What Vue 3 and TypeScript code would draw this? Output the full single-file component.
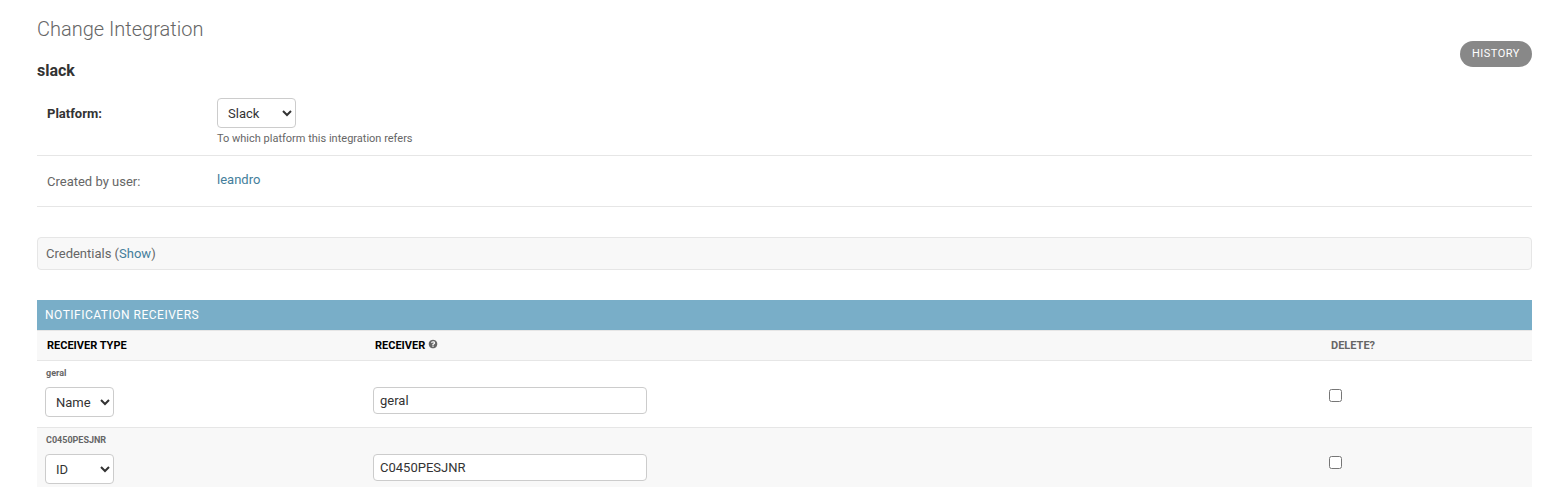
<script setup lang="ts">
import { ref } from 'vue'

interface Receiver {
  id: number
  label: string
  type: 'Name' | 'ID'
  value: string
  remove: boolean
}

const platform = ref('Slack')
const receivers = ref<Receiver[]>([
  { id: 1, label: 'geral', type: 'Name', value: 'geral', remove: false },
  { id: 2, label: 'C0450PESJNR', type: 'ID', value: 'C0450PESJNR', remove: false },
])
</script>

<template>
  <main class="content">
    <header class="page-header">
      <div>
        <h1>Change Integration</h1>
        <h2>slack</h2>
      </div>
      <a class="history">HISTORY</a>
    </header>

    <section class="fields">
      <div class="form-row platform-row">
        <label class="required">Platform:</label>
        <div>
          <select v-model="platform" class="platform-select">
            <option>Slack</option>
          </select>
          <p class="help">To which platform this integration refers</p>
        </div>
      </div>
      <div class="form-row user-row">
        <label>Created by user:</label>
        <a class="link user">leandro</a>
      </div>
    </section>

    <section class="collapsed">Credentials (<a class="link">Show</a>)</section>

    <section class="inline-group">
      <h3>NOTIFICATION RECEIVERS</h3>
      <div class="grid-row heads">
        <span>RECEIVER TYPE</span>
        <span class="head-receiver">
          RECEIVER
          <svg class="help-icon" viewBox="0 0 1792 1792" width="10" height="10">
            <path
              fill="#666"
              d="M1024 1376v-192q0-14-9-23t-23-9h-192q-14 0-23 9t-9 23v192q0 14 9 23t23 9h192q14 0 23-9t9-23zm256-672q0-88-55.500-163t-138.500-116-170-41q-243 0-371 213-15 24 8 42l132 100q7 6 19 6 16 0 25-12 53-68 86-92 34-24 86-24 48 0 85.500 26t37.500 59q0 38-20 61t-68 45q-63 28-115.500 86.500t-52.500 125.500v36q0 14 9 23t23 9h192q14 0 23-9t9-23q0-19 21.500-49.500t54.500-49.500q32-18 49-28.500t46-35 44.500-48 28-60.500 12.500-81zm384 192q0 209-103 385.500t-279.500 279.500-385.500 103-385.500-103-279.500-279.500-103-385.500 103-385.500 279.500-279.500 385.500-103 385.500 103 279.500 279.500 103 385.500z"
            />
          </svg>
        </span>
        <span class="head-delete">DELETE?</span>
      </div>
      <div v-for="r in receivers" :key="r.id" class="grid-row receiver">
        <div>
          <p class="original">{{ r.label }}</p>
          <select v-model="r.type" class="type-select">
            <option>Name</option>
            <option>ID</option>
          </select>
        </div>
        <input v-model="r.value" type="text" class="text-field" spellcheck="false" />
        <input v-model="r.remove" type="checkbox" class="delete-box" />
      </div>
    </section>
  </main>
</template>

<style>
html,
body {
  margin: 0;
  background: #fff;
  overflow: hidden;
}
</style>

<style scoped>
.content {
  box-sizing: border-box;
  height: 487px;
  overflow: hidden;
  padding: 17px 22px 0 37px;
  font-family: Roboto, "Liberation Sans", sans-serif;
  font-size: 13px;
  color: #333;
}
h1,
h2,
h3,
p {
  margin: 0;
}
.page-header {
  display: flex;
  justify-content: space-between;
  height: 71px;
}
h1 {
  font-size: 20px;
  font-weight: 300;
  line-height: 24px;
  color: #666;
}
h2 {
  margin-top: 20px;
  font-size: 16px;
  font-weight: 700;
  line-height: 19px;
}
.history {
  box-sizing: border-box;
  width: 72px;
  height: 26px;
  margin-top: 24px;
  border-radius: 15px;
  background: #888;
  color: #fff;
  font-size: 11px;
  line-height: 25px;
  letter-spacing: 0.5px;
  padding-left: 12px;
}
.form-row {
  box-sizing: border-box;
  display: grid;
  grid-template-columns: 170px 1fr;
  padding: 10px 10px 0;
  border-bottom: 1px solid #e6e6e6;
}
.platform-row {
  height: 68px;
}
.user-row {
  height: 51px;
}
label {
  padding-top: 8px;
  line-height: 15px;
  color: #666;
}
.required {
  font-weight: 700;
  color: #333;
}
.link {
  color: #447e9b;
}
.user {
  padding-top: 6px;
  line-height: 15px;
}
select,
.text-field {
  box-sizing: border-box;
  display: block;
  margin: 0;
  border: 1px solid #ccc;
  border-radius: 4px;
  background-color: #fff;
  color: #333;
  font-family: inherit;
  font-size: 13px;
  font-weight: 400;
}
select {
  height: 30px;
  padding: 5px 6px;
}
.platform-select {
  width: 79px;
}
.type-select {
  width: 69px;
}
.help {
  margin-top: 4px;
  font-size: 11px;
  line-height: 13px;
  color: #666;
}
.collapsed {
  box-sizing: border-box;
  height: 33px;
  margin-top: 30px;
  padding: 8px;
  border: 1px solid #e6e6e6;
  border-radius: 4px;
  background: #f8f8f8;
  line-height: 15px;
  color: #666;
}
.inline-group {
  margin-top: 30px;
}
h3 {
  height: 30px;
  padding-left: 8px;
  background: #79aec8;
  color: #fff;
  font-size: 12px;
  font-weight: 400;
  line-height: 30px;
  letter-spacing: 0.5px;
}
.grid-row {
  box-sizing: border-box;
  display: grid;
  grid-template-columns: 328px 956px 1fr;
  align-items: start;
  padding-left: 8px;
}
.heads {
  height: 31px;
  padding: 8px 0 0 10px;
  border-top: 1px solid #e6e6e6;
  border-bottom: 1px solid #e6e6e6;
  background: #f8f8f8;
  color: #000;
  font-size: 11px;
  font-weight: 700;
  line-height: 13px;
}
.head-receiver {
  display: flex;
  gap: 3px;
}
.head-delete {
  color: #666;
}
.receiver {
  height: 67px;
  border-bottom: 1px solid #e6e6e6;
}
.receiver:nth-child(even) {
  background: #fff;
}
.receiver:last-child {
  background: #f8f8f8;
}
.original {
  height: 26px;
  padding-left: 1px;
  font-size: 9px;
  font-weight: 700;
  line-height: 24px;
  color: #666;
}
.text-field {
  width: 274px;
  height: 27px;
  margin-top: 26px;
  padding: 5px 6px;
}
.delete-box {
  width: 13px;
  height: 13px;
  margin: 28px 0 0;
}
</style>
